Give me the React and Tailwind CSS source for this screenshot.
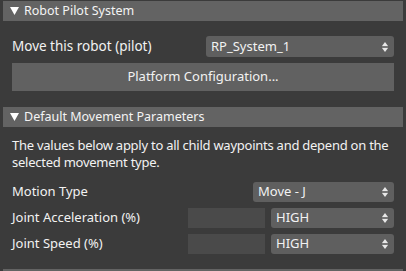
import React from "react";

const font = { fontFamily: '"Noto Sans", "Open Sans", sans-serif' };

function Spinner() {
  return (
    <svg width="6" height="10" viewBox="0 0 6 10" className="shrink-0">
      <path d="M3 0 L6 4 L0 4 Z" fill="#e8e8e8" />
      <path d="M3 10 L6 6 L0 6 Z" fill="#e8e8e8" />
      <rect x="0" y="4.6" width="6" height="0.8" fill="#9a9a9a" />
    </svg>
  );
}

function Select({ value, className }) {
  return (
    <div
      className={`flex items-center justify-between rounded-[3px] bg-[#5f5f5f] pl-[5px] pr-[6px] text-[13px] text-[#f2f2f2] ${className}`}
    >
      <span>{value}</span>
      <Spinner />
    </div>
  );
}

function Header({ title }) {
  return (
    <div className="flex h-[20px] items-center bg-[#636363] pl-[7px] text-[12.5px] text-[#f4f4f4]">
      <svg width="9" height="8" viewBox="0 0 9 8" className="mr-[5px]">
        <path d="M0 0 L9 0 L4.5 8 Z" fill="#ffffff" />
      </svg>
      <span>{title}</span>
    </div>
  );
}

export default function App() {
  return (
    <div
      style={font}
      className="h-[271px] w-[406px] overflow-hidden bg-[#3b3b3b] pl-[3px] pr-[3px] pt-[1px]"
    >
      <Header title="Robot Pilot System" />
      <div className="px-[9px] pt-[15px] pb-[16px]">
        <div className="flex items-center justify-between">
          <span className="text-[13.5px] text-[#f2f2f2]">Move this robot (pilot)</span>
          <Select value="RP_System_1" className="h-[21px] w-[188px]" />
        </div>
        <div className="mt-[6px] flex h-[28px] items-center justify-center bg-[#616161] text-[13px] text-[#f2f2f2]">
          Platform Configuration...
        </div>
      </div>
      <Header title="Default Movement Parameters" />
      <div className="px-[9px] pt-[10px]">
        <p className="-mr-[6px] text-[13px] leading-[17px] tracking-[-0.25px] text-[#f2f2f2]">
          The values below apply to all child waypoints and depend on the selected movement type.
        </p>
        <div className="mt-[11px] flex items-center justify-between">
          <span className="text-[13px] text-[#f2f2f2]">Motion Type</span>
          <Select value="Move - J" className="h-[20px] w-[141px]" />
        </div>
        <div className="mt-[6px] flex items-center">
          <span className="flex-1 text-[13px] text-[#f2f2f2]">Joint Acceleration (%)</span>
          <div className="h-[20px] w-[77px] bg-[#4a4a4a]" />
          <Select value="HIGH" className="ml-[6px] h-[20px] w-[123px]" />
        </div>
        <div className="mt-[6px] flex items-center">
          <span className="flex-1 text-[13px] text-[#f2f2f2]">Joint Speed (%)</span>
          <div className="h-[20px] w-[77px] bg-[#4a4a4a]" />
          <Select value="HIGH" className="ml-[6px] h-[20px] w-[123px]" />
        </div>
      </div>
      <div className="mt-[15px] h-[20px] bg-[#636363]" />
    </div>
  );
}
